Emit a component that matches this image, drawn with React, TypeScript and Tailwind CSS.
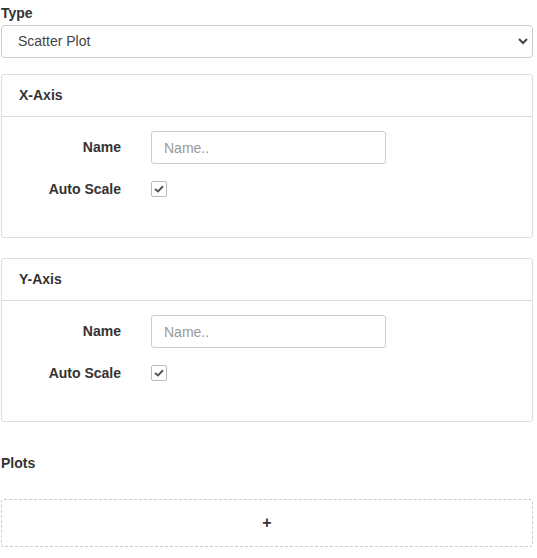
import React from "react";

function Check() {
  return (
    <div className="w-[16px] h-[16px] border border-[#bbb] rounded-[2px] flex items-center justify-center bg-white">
      <svg width="10" height="8" viewBox="0 0 10 8"><path d="M1 4 L4 6.5 L9 1.2" stroke="#555" strokeWidth="2" fill="none" /></svg>
    </div>
  );
}

function Axis({ title }: { title: string }) {
  return (
    <div className="border border-[#ddd] rounded-[3px] h-[164px]">
      <div className="h-[42px] border-b border-[#ddd] flex items-center pl-[17px] font-bold text-[14px] text-[#333]">{title}</div>
      <div className="pt-[14px]">
        <div className="flex items-center h-[33px]">
          <div className="w-[119px] text-right font-bold text-[14px] text-[#333]">Name</div>
          <input placeholder="Name.." className="ml-[30px] w-[235px] h-[33px] border border-[#ccc] rounded-[3px] px-[12px] text-[14px] placeholder-[#999] outline-none" />
        </div>
        <div className="flex items-center mt-[17px] h-[16px]">
          <div className="w-[119px] text-right font-bold text-[14px] text-[#333]">Auto Scale</div>
          <div className="ml-[30px]"><Check /></div>
        </div>
      </div>
    </div>
  );
}

export default function App() {
  return (
    <div className="w-[537px] h-[558px] bg-white pl-[1px] pr-[4px] text-[#333]" style={{ fontFamily: '"Liberation Sans", Arial, sans-serif' }}>
      <div className="pt-[2px] h-[24px] font-bold text-[14px] flex items-center">Type</div>
      <div className="mt-[1px] h-[33px] border border-[#ccc] rounded-[4px] flex items-center justify-between pl-[16px] pr-[4px] text-[14px] text-[#444]">
        <span>Scatter Plot</span>
        <svg width="10" height="7" viewBox="0 0 10 7"><path d="M1 1 L5 5 L9 1" stroke="#444" strokeWidth="2" fill="none" /></svg>
      </div>
      <div className="mt-[16px]"><Axis title="X-Axis" /></div>
      <div className="mt-[20px]"><Axis title="Y-Axis" /></div>
      <div className="mt-[32px] h-[18px] font-bold text-[14px] flex items-center">Plots</div>
      <div className="mt-[27px] h-[48px] border border-dashed border-[#ccc] rounded-[3px] flex items-center justify-center font-bold text-[16px]">+</div>
    </div>
  );
}
